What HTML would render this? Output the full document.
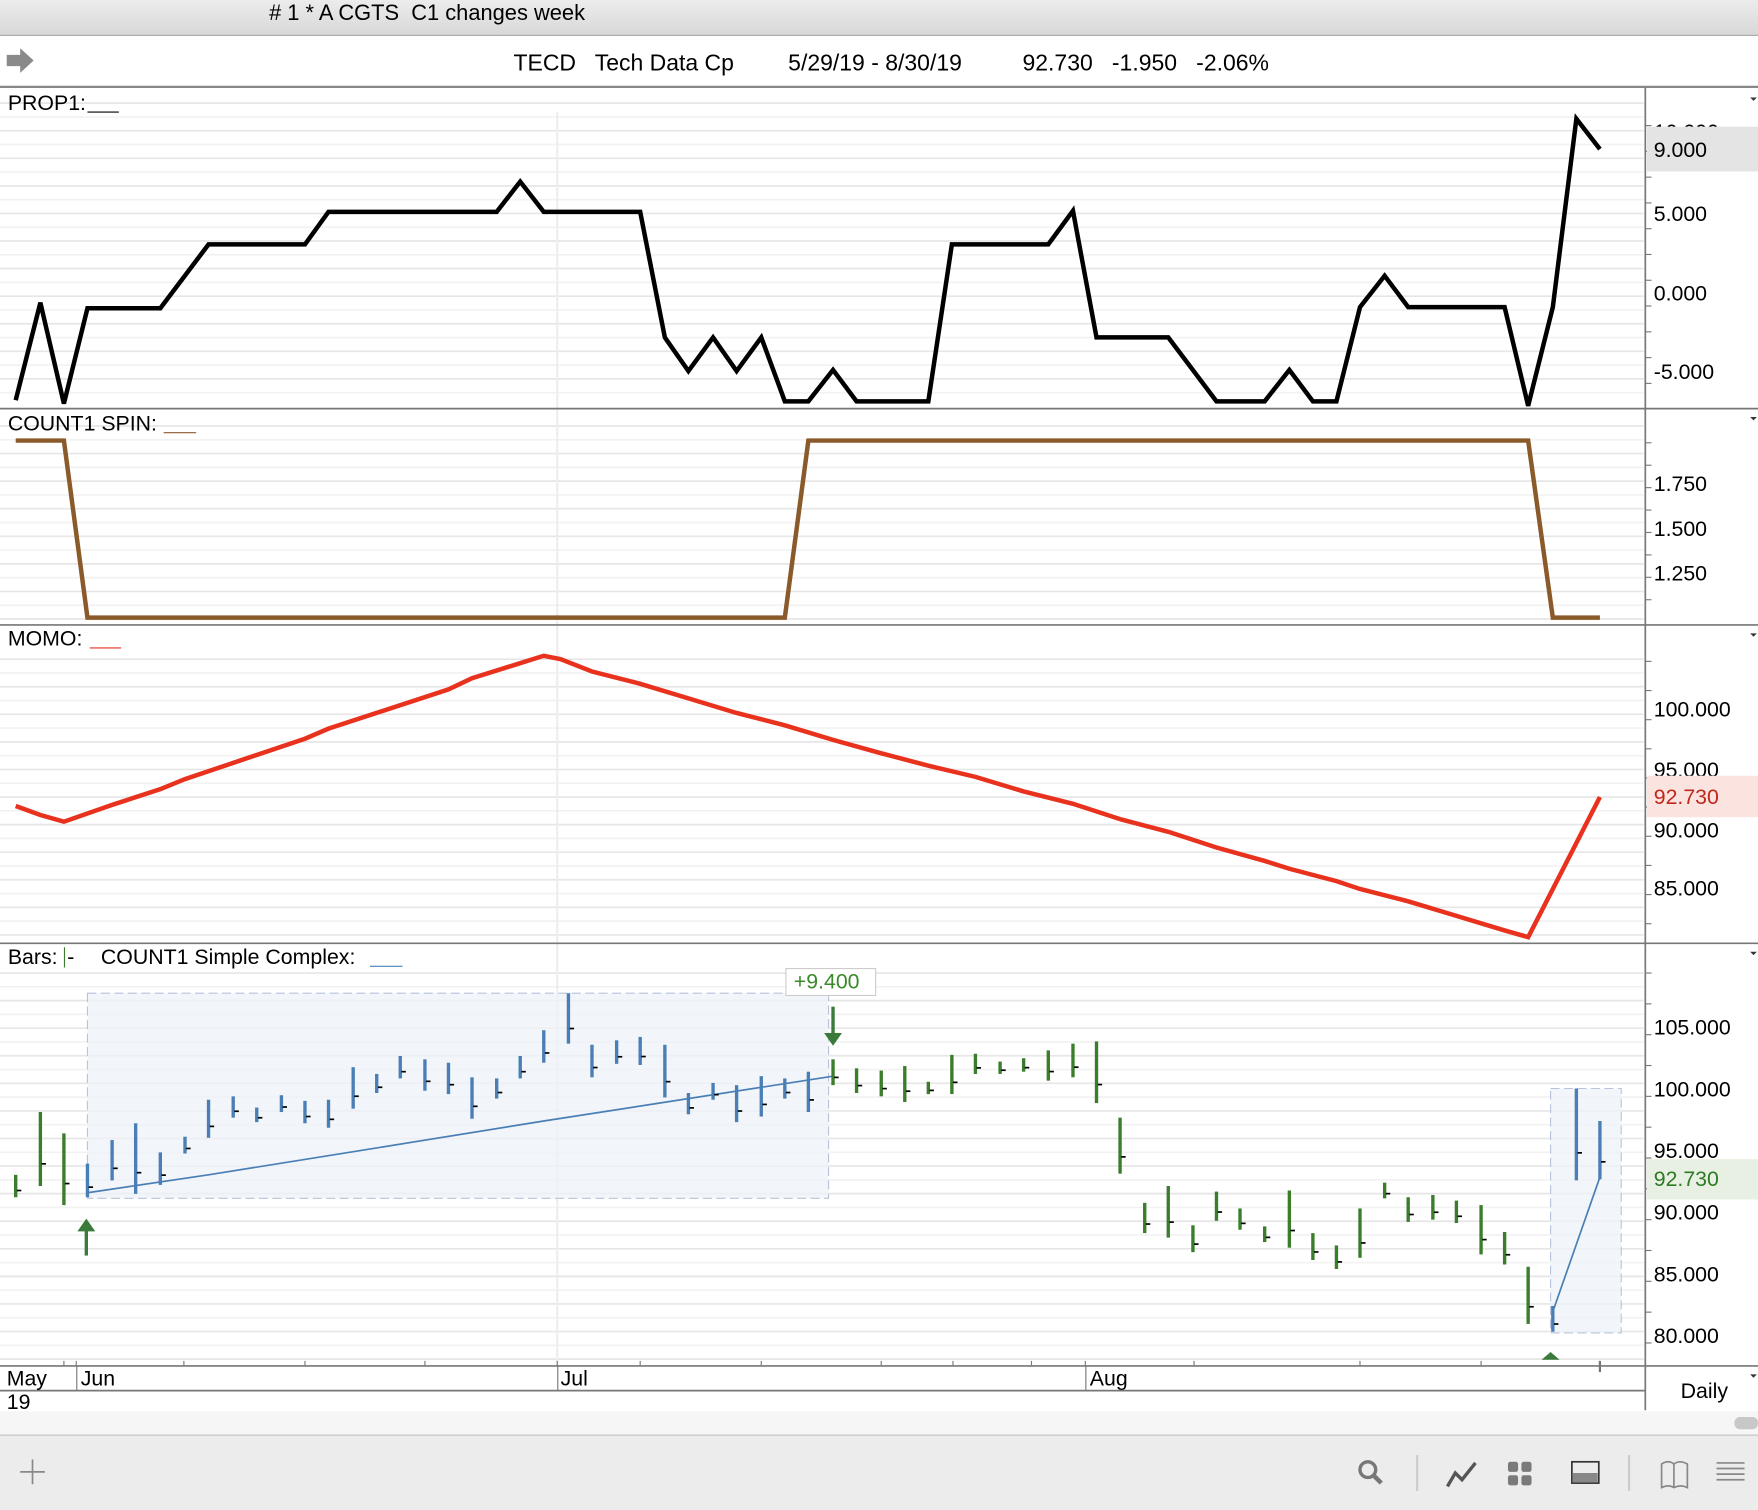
<!DOCTYPE html>
<html><head><meta charset="utf-8"><style>
html,body{margin:0;padding:0;background:#fff;overflow:hidden}
svg{display:block}
text{font-family:"Liberation Sans",Arial,sans-serif;fill:#000;white-space:pre}
</style></head><body>
<svg id="s" width="1758" height="1510" viewBox="0 0 1568 1347" preserveAspectRatio="none" xmlns="http://www.w3.org/2000/svg" xml:space="preserve">
<defs><linearGradient id="tb" x1="0" y1="0" x2="0" y2="1"><stop offset="0" stop-color="#ececec"/><stop offset="1" stop-color="#d8d8d8"/></linearGradient></defs>
<rect x="0" y="0" width="1568" height="31" fill="url(#tb)"/>
<line x1="0" y1="31.5" x2="1568" y2="31.5" stroke="#a0a0a0"/>
<text x="240" y="18" font-size="19.5"># 1 * A CGTS  C1 changes week</text>
<path d="M6 49h12v-6l12 11-12 11v-6H6z" fill="#8a8a8a"/>
<text x="458" y="63" font-size="20.5">TECD   Tech Data Cp</text>
<text x="703" y="63" font-size="20.5">5/29/19 - 8/30/19</text>
<text x="912" y="63" font-size="20.5">92.730   -1.950   -2.06%</text>
<line x1="0" y1="77.5" x2="1568" y2="77.5" stroke="#888" stroke-width="2"/>
<g id="grid"></g>
<line x1="497" y1="100" x2="497" y2="1218" stroke="#eee" stroke-width="2"/>
<g stroke="#777" stroke-width="1.5">
<line x1="0" y1="364.5" x2="1568" y2="364.5"/>
<line x1="0" y1="557.5" x2="1568" y2="557.5"/>
<line x1="0" y1="841.5" x2="1568" y2="841.5"/>
<line x1="0" y1="1218.5" x2="1568" y2="1218.5"/>
<line x1="0" y1="1240.5" x2="1467" y2="1240.5"/>
<line x1="1467.5" y1="78" x2="1467.5" y2="1258"/>
</g>
<g id="ticks" stroke="#777"></g>
<text x="7" y="98" font-size="19">PROP1:</text><line x1="78" y1="100" x2="106" y2="100" stroke="#000"/>
<text x="7" y="384" font-size="19">COUNT1 SPIN:</text><line x1="146" y1="386" x2="175" y2="386" stroke="#8b5a2b"/>
<text x="7" y="576" font-size="19">MOMO:</text><line x1="80" y1="578" x2="108" y2="578" stroke="#e8321e"/>
<text x="7" y="860" font-size="19">Bars:</text><line x1="57.5" y1="845" x2="57.5" y2="863" stroke="#3a7d2a"/><text x="60" y="860" font-size="19">-</text>
<text x="90" y="860" font-size="19">COUNT1 Simple Complex:</text><line x1="330" y1="862" x2="359" y2="862" stroke="#4a7fb5"/>
<g fill="#333"><path d="M1561 87h6l-3 3z"/><path d="M1561 372h6l-3 3z"/><path d="M1561 565h6l-3 3z"/><path d="M1561 849h6l-3 3z"/><path d="M1561 1226h6l-3 3z"/></g>
<polyline fill="none" stroke="#000" stroke-width="4" points="14,357 36,270 57,360 78,275 143,275 186,218 272,218 293,189 443,189 464,162 485,189 571,189 593,301 614,331 636,301 657,331 679,301 700,358 721,358 743,330 764,358 828,358 849,218 935,218 957,188 978,301 1042,301 1085,358 1128,358 1150,330 1171,358 1192,358 1213,274 1235,246 1256,274 1342,274 1363,362 1385,274 1406,106 1427,133"/>
<polyline fill="none" stroke="#8b5a2b" stroke-width="4" points="14,393 57,393 78,551 700,551 721,393 1363,393 1385,551 1427,551"/>
<polyline fill="none" stroke="#e8321e" stroke-width="4" points="14,719 36,727 57,733 100,718 143,704 165,695 272,659 293,650 400,615 421,605 485,585 500,588 528,599 571,610 614,623 657,636 700,647 743,660 786,672 828,683 870,693 913,706 957,717 1000,731 1042,742 1085,756 1128,768 1150,775 1192,786 1213,793 1256,804 1299,817 1342,830 1363,836 1427,711"/>
<g font-size="19">
<text x="1475" y="124">10.000</text>
<rect x="1469" y="113" width="99" height="40" fill="#e4e4e4"/>
<text x="1475" y="140">9.000</text>
<text x="1475" y="197">5.000</text><text x="1475" y="268">0.000</text><text x="1475" y="338">-5.000</text>
<text x="1475" y="438">1.750</text><text x="1475" y="478">1.500</text><text x="1475" y="518">1.250</text>
<text x="1475" y="639">100.000</text><text x="1475" y="693">95.000</text>
<rect x="1469" y="692" width="99" height="37" fill="#fbe3e0"/>
<text x="1475" y="717" style="fill:#c0281c">92.730</text>
<text x="1475" y="747">90.000</text><text x="1475" y="799">85.000</text>
<text x="1475" y="923">105.000</text><text x="1475" y="978">100.000</text><text x="1475" y="1033">95.000</text>
<rect x="1469" y="1034" width="99" height="36" fill="#e7f0e2"/>
<text x="1475" y="1058" style="fill:#2f7a25">92.730</text>
<text x="1475" y="1088">90.000</text><text x="1475" y="1143">85.000</text><text x="1475" y="1198">80.000</text>
</g>
<rect x="78" y="886" width="661" height="183" fill="#eef1f8" fill-opacity="0.75" stroke="#b8c4dc" stroke-dasharray="8 4"/>
<rect x="1383" y="971" width="63" height="218" fill="#eef1f8" fill-opacity="0.75" stroke="#b8c4dc" stroke-dasharray="8 4"/>
<rect x="701" y="864" width="80" height="24" fill="#fff" stroke="#ccc"/>
<text x="708" y="882" font-size="19" style="fill:#3a8a2a">+9.400</text>
<polyline fill="none" stroke="#4a7fb5" stroke-width="1.5" points="78,1064 186,1048 336,1024 485,1000 743,960"/>
<line x1="1385" y1="1170" x2="1427" y2="1050" stroke="#4a7fb5" stroke-width="1.5"/>
<g id="bars"></g>
<g fill="#3a7a3a" stroke="#3a7a3a"><path d="M70 1098l7-10 7 10z"/><line x1="77" y1="1096" x2="77" y2="1120" stroke-width="3"/>
<path d="M736 922l7 10 7-10z"/><line x1="743" y1="898" x2="743" y2="924" stroke-width="3"/>
<path d="M1375 1213l8-7 8 7z" stroke="none"/></g>
<g font-size="19"><text x="6" y="1236">May</text><text x="6" y="1257">19</text><text x="72" y="1236">Jun</text><text x="500" y="1236">Jul</text><text x="972" y="1236">Aug</text><text x="1499" y="1247">Daily</text></g>
<rect x="0" y="1259" width="1568" height="21" fill="#f6f6f6"/>
<rect x="1547" y="1264" width="21" height="11" rx="5" fill="#c8c8c8"/>
<line x1="0" y1="1280.5" x2="1568" y2="1280.5" stroke="#d0d0d0" stroke-width="2"/>
<rect x="0" y="1281" width="1568" height="66" fill="#ececec"/>
<g stroke="#777" fill="none" stroke-width="2">
<path d="M29 1302v22M18 1313h22" stroke="#888" stroke-width="1.5"/>
<circle cx="1220" cy="1311" r="7" stroke-width="3"/><line x1="1225" y1="1316" x2="1232" y2="1323" stroke-width="4"/>
<line x1="1264" y1="1298" x2="1264" y2="1330" stroke="#ccc"/>
<path d="M1291 1326l7-12 6 6 12-15" stroke="#555" stroke-width="3"/>
<line x1="1453" y1="1298" x2="1453" y2="1330" stroke="#ccc"/>
<path d="M1482 1327v-21q6-4 11 0 5-4 12 0v21q-6-3-12 0-5-3-11 0zM1493 1306v21" stroke="#888" stroke-width="1.5"/>
<path d="M1531 1305h25M1531 1310h25M1531 1315h25M1531 1320h25" stroke="#888" stroke-width="1.5"/>
</g>
<g fill="#7a7a7a"><rect x="1345" y="1304" width="9" height="9" rx="2"/><rect x="1357" y="1304" width="9" height="9" rx="2"/><rect x="1345" y="1316" width="9" height="9" rx="2"/><rect x="1357" y="1316" width="9" height="9" rx="2"/></g>
<rect x="1402" y="1304" width="24" height="19" fill="none" stroke="#333" stroke-width="1.5"/><rect x="1403" y="1314" width="22" height="8" fill="#888"/>
</svg>
<script>
var ns="http://www.w3.org/2000/svg";
function el(p,t,a){var e=document.createElementNS(ns,t);for(var k in a)e.setAttribute(k,a[k]);p.appendChild(e);return e;}
var g=document.getElementById('grid');
[[92,362],[380,555],[588,838],[868,1216]].forEach(function(r){for(var y=r[0],i=0;y<r[1];y+=12.3,i++)el(g,'line',{x1:0,x2:1466,y1:y,y2:y,stroke:i%2?'#f2f2f2':'#e6e6e6','stroke-width':1.5});});
var tk=document.getElementById('ticks');
[[112,360,23],[395,555,20],[590,838,26],[868,1216,27.5]].forEach(function(r){for(var y=r[0];y<r[1];y+=r[2])el(tk,'line',{x1:1467,x2:1473,y1:y,y2:y});});
[57,68,164,272,379,497,571,679,786,850,920,968,1065,1213,1321,1427].forEach(function(x){el(tk,'line',{x1:x,x2:x,y1:1214,y2:1218});});
el(tk,'line',{x1:68.5,x2:68.5,y1:1218,y2:1240});el(tk,'line',{x1:497.5,x2:497.5,y1:1218,y2:1240});el(tk,'line',{x1:968.5,x2:968.5,y1:1218,y2:1240});el(tk,'line',{x1:1427,x2:1427,y1:1214,y2:1224,'stroke-width':2});
var B=[[14,1048,1068,'g'],[36,992,1058,'g'],[57,1011,1075,'g'],[78,1038,1068],[100,1017,1053],[121,1002,1065],[143,1028,1057],[165,1014,1029],[186,981,1015],[208,978,997],[229,988,1001],[251,977,992],[272,982,1002],[293,981,1006],[315,952,989],[336,958,975],[357,942,962],[379,945,973],[400,948,976],[421,961,998],[443,962,980],[464,942,962],[485,919,948],[507,886,931],[528,932,961],[550,928,949],[571,925,950],[593,932,979],[614,975,994],[636,966,981],[657,968,1001],[679,960,996],[700,962,980],[721,956,992],
[743,945,968,'g'],[764,953,975,'g'],[786,955,978,'g'],[807,951,983,'g'],[828,965,976,'g'],[849,941,976,'g'],[870,940,958,'g'],[892,947,958,'g'],[913,944,956,'g'],[935,937,964,'g'],[957,931,961,'g'],[978,929,984,'g'],[999,997,1047,'g'],[1021,1073,1100,'g'],[1042,1058,1104,'g'],[1064,1093,1117,'g'],[1085,1063,1089,'g'],[1106,1078,1097,'g'],[1128,1094,1108,'g'],[1150,1062,1113,'g'],[1171,1100,1124,'g'],[1192,1111,1132,'g'],[1213,1078,1122,'g'],[1235,1055,1069,'g'],[1256,1068,1090,'g'],[1278,1066,1088,'g'],[1299,1071,1091,'g'],[1321,1075,1119,'g'],[1342,1099,1128,'g'],[1363,1130,1181,'g'],[1385,1165,1188],[1406,971,1053],[1427,1000,1052]];
var bg=document.getElementById('bars');
B.forEach(function(b){var c=b[3]?'#3a7d2a':'#4a7fb5';el(bg,'line',{x1:b[0],x2:b[0],y1:b[1],y2:b[2],stroke:c,'stroke-width':3});var cy=b[1]+(b[2]-b[1])*0.7;el(bg,'line',{x1:b[0]+1,x2:b[0]+5,y1:cy,y2:cy,stroke:'#000','stroke-width':1.5});});
</script>
</body></html>
